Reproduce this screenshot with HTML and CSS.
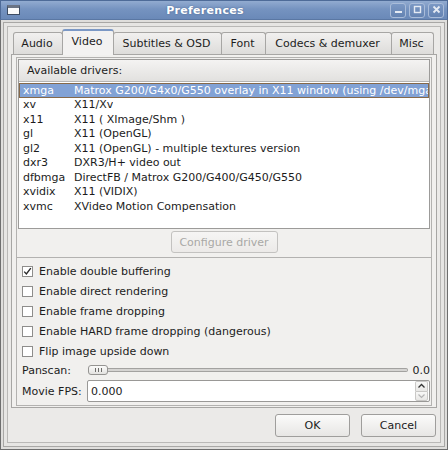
FILE: index.html
```html
<!DOCTYPE html>
<html>
<head>
  <title>Preferences</title>
  <link rel="stylesheet" href="styles.css">
</head>
<body>
<div class="window">
  <div class="titlebar">
    <div class="winicon"></div>
    <div class="title">Preferences</div>
    <div class="wbtns">
      <div class="wbtn">
        <svg width="13" height="12" viewBox="0 0 13 12"><rect x="3" y="7" width="7" height="2" fill="#e4eaf3"/></svg>
      </div>
      <div class="wbtn">
        <svg width="13" height="12" viewBox="0 0 13 12"><rect x="3.5" y="2.5" width="6" height="6" fill="none" stroke="#e4eaf3" stroke-width="1.4"/></svg>
      </div>
      <div class="wbtn">
        <svg width="13" height="12" viewBox="0 0 13 12"><path d="M3.5 2.5 L9.5 8.5 M9.5 2.5 L3.5 8.5" stroke="#e4eaf3" stroke-width="1.8"/></svg>
      </div>
    </div>
  </div>

  <div class="client">
    <div class="dialog">
      <div class="tabs">
        <div class="tab">Audio</div>
        <div class="tab active">Video</div>
        <div class="tab">Subtitles &amp; OSD</div>
        <div class="tab">Font</div>
        <div class="tab">Codecs &amp; demuxer</div>
        <div class="tab">Misc</div>
      </div>

      <div class="panel">
        <div class="drivers">
          <div class="list">
            <div class="listhead">Available drivers:</div>
            <div class="row sel"><span class="name">xmga</span><span class="desc">Matrox G200/G4x0/G550 overlay in X11 window (using /dev/mga_vid)</span></div>
            <div class="row"><span class="name">xv</span><span class="desc">X11/Xv</span></div>
            <div class="row"><span class="name">x11</span><span class="desc">X11 ( XImage/Shm )</span></div>
            <div class="row"><span class="name">gl</span><span class="desc">X11 (OpenGL)</span></div>
            <div class="row"><span class="name">gl2</span><span class="desc">X11 (OpenGL) - multiple textures version</span></div>
            <div class="row"><span class="name">dxr3</span><span class="desc">DXR3/H+ video out</span></div>
            <div class="row"><span class="name">dfbmga</span><span class="desc">DirectFB / Matrox G200/G400/G450/G550</span></div>
            <div class="row"><span class="name">xvidix</span><span class="desc">X11 (VIDIX)</span></div>
            <div class="row"><span class="name">xvmc</span><span class="desc">XVideo Motion Compensation</span></div>
          </div>
          <div class="confrow">
            <button class="btn conf" disabled>Configure driver</button>
          </div>
        </div>

        <div class="options">
          <div class="check">
            <span class="box"><svg width="9" height="9" viewBox="0 0 9 9"><path d="M1.2 4.6 L3.4 7 L7.8 1.2" fill="none" stroke="#2a2a2a" stroke-width="1.4"/></svg></span>
            Enable double buffering
          </div>
          <div class="check"><span class="box"></span>Enable direct rendering</div>
          <div class="check"><span class="box"></span>Enable frame dropping</div>
          <div class="check"><span class="box"></span>Enable HARD frame dropping (dangerous)</div>
          <div class="check"><span class="box"></span>Flip image upside down</div>

          <div class="field pan">
            <span class="flabel">Panscan:</span>
            <div class="slider">
              <div class="handle"><i></i><i></i><i></i></div>
              <div class="groove"></div>
            </div>
            <span class="value">0.0</span>
          </div>
          <div class="field fps">
            <span class="flabel">Movie FPS:</span>
            <div class="spin">
              <span class="spintext">0.000</span>
              <div class="arrows">
                <div class="arrow up"><svg width="9" height="6" viewBox="0 0 9 6"><path d="M1.5 4.5 L4.5 1.5 L7.5 4.5" fill="none" stroke="#333" stroke-width="1.3"/></svg></div>
                <div class="arrow down"><svg width="9" height="6" viewBox="0 0 9 6"><path d="M1.5 1.5 L4.5 4.5 L7.5 1.5" fill="none" stroke="#b4b4b4" stroke-width="1.2"/></svg></div>
              </div>
            </div>
          </div>
        </div>
      </div>

      <div class="actions">
        <button class="btn">OK</button>
        <button class="btn">Cancel</button>
      </div>
    </div>
  </div>
</div>
</body>
</html>
```

FILE: styles.css
```css
* {
  box-sizing: border-box;
}

body {
  margin: 0;
  font-family: "DejaVu Sans", Verdana, sans-serif;
  font-size: 11px;
  color: #1c1c1c;
}

/* window frame */
.window {
  width: 448px;
  height: 450px;
  display: flex;
  flex-direction: column;
  background: #dfdedc;
  border: 1px solid #6e6e6e;
  border-top: none;
}

.titlebar {
  height: 20px;
  margin: 0 -1px;
  display: flex;
  align-items: center;
  background: linear-gradient(#92abd0, #7593c0 45%, #6a89b8);
  border: 1px solid #4e6b98;
  border-bottom-color: #5a77a3;
  color: #fff;
}

.winicon {
  width: 13px;
  height: 10px;
  margin-left: 6px;
  background: #fafafa;
  border: 1px solid #3d4c63;
  border-top-width: 3px;
  border-top-color: #6b7484;
}

.title {
  flex: 1;
  text-align: center;
  font-weight: bold;
  font-size: 11px;
  letter-spacing: 0.3px;
  text-shadow: 0 0 2px #4b6791;
}

.wbtns {
  display: flex;
  gap: 3px;
  margin-right: 3px;
}

.wbtn {
  width: 16px;
  height: 15px;
  border: 1px solid #a9bcd9;
  border-radius: 3px;
  background: linear-gradient(#7b98c4, #6483b2);
  display: flex;
  align-items: center;
  justify-content: center;
}

.client {
  flex: 1;
  min-width: 0;
  display: flex;
  margin: 2px;
  padding: 3px;
  border: 1px solid #a8a7a5;
  background: #e6e5e3;
}

.dialog {
  flex: 1;
  min-width: 0;
  display: flex;
  flex-direction: column;
  padding: 2px 3px 5px;
  border: 1px solid #b9b8b6;
  background: #ebeae8;
}

/* tabs */
.tabs {
  height: 25px;
  display: flex;
  align-items: flex-end;
  padding-left: 2px;
  position: relative;
  z-index: 1;
}

.tab {
  height: 22px;
  margin-right: -1px;
  padding-right: 2px;
  display: flex;
  align-items: center;
  justify-content: center;
  border: 1px solid #a7a6a4;
  border-bottom: none;
  border-radius: 3px 3px 0 0;
  background: linear-gradient(#f1f0ef, #dddcda);
  white-space: nowrap;
}

.tab:nth-child(1) { width: 50px; }
.tab:nth-child(2) { width: 52px; }
.tab:nth-child(3) { width: 109px; }
.tab:nth-child(4) { width: 45px; }
.tab:nth-child(5) { width: 127px; }
.tab:nth-child(6) { width: 43px; }

.tab.active {
  height: 26px;
  margin-bottom: -1px;
  padding-bottom: 3px;
  background: #f3f2f1;
  border-top: 2px solid #7b98c5;
}

.panel {
  flex: 1;
  min-width: 0;
  padding: 2px 4px 1px;
  border: 1px solid #a7a6a4;
  background: #f1f0ee;
}

/* driver list */
.drivers {
  padding: 1px 1px 4px;
  border: 1px solid #b3b2b0;
}

.list {
  height: 170px;
  overflow: hidden;
  border: 1px solid #9c9b99;
  background: #fff;
}

.listhead {
  height: 22px;
  padding-left: 8px;
  display: flex;
  align-items: center;
  background: linear-gradient(#f4f3f2, #e2e1df);
  border-bottom: 1px solid #b5b4b2;
}

.row {
  height: 14.5px;
  display: flex;
  align-items: center;
  white-space: nowrap;
  overflow: hidden;
}

.listhead + .row {
  margin-top: 1px;
}

.row.sel {
  background: #82a2d5;
  color: #fff;
  outline: 1px solid #86694a;
  outline-offset: -1px;
}

.name {
  width: 55px;
  flex: none;
  padding-left: 4px;
}

.desc {
  overflow: hidden;
}

.confrow {
  display: flex;
  justify-content: center;
  margin-top: 2px;
}

.btn {
  height: 23px;
  font: inherit;
  color: #1c1c1c;
  border: 1px solid #9f9e9c;
  border-radius: 3px;
  background: linear-gradient(#fbfbfa, #e7e6e4);
  padding: 0;
}

.btn.conf {
  width: 107px;
  height: 22px;
  color: #a9a8a6;
  border-color: #c3c2c0;
  background: linear-gradient(#f6f5f4, #eceae8);
}

/* options */
.options {
  padding: 3px 1px 3px 5px;
  border: 1px solid #b3b2b0;
  border-top: none;
}

.check {
  height: 20px;
  display: flex;
  align-items: center;
}

.box {
  width: 11px;
  height: 11px;
  margin-right: 6px;
  border: 1px solid #8e8d8b;
  background: #fff;
  display: flex;
  align-items: center;
  justify-content: center;
}

.field {
  display: flex;
  align-items: center;
}

.field.pan {
  height: 18px;
}

.field.fps {
  height: 22px;
  margin-top: 1px;
}

.flabel {
  width: 66px;
  flex: none;
}

.slider {
  flex: 1;
  display: flex;
  align-items: center;
}

.handle {
  width: 20px;
  height: 10px;
  border: 1px solid #959492;
  border-radius: 3px;
  background: linear-gradient(#fbfbfa, #e3e2e0);
  display: flex;
  justify-content: center;
  align-items: center;
  gap: 2px;
}

.handle i {
  width: 1px;
  height: 4px;
  background: #6d6c6a;
}

.groove {
  flex: 1;
  height: 4px;
  border: 1px solid #a3a2a0;
  border-left: none;
  border-radius: 0 2px 2px 0;
  background: #d5d4d2;
}

.value {
  width: 22px;
  text-align: right;
}

.spin {
  flex: 1;
  height: 22px;
  margin-left: -1px;
  display: flex;
  align-items: center;
  border: 1px solid #999896;
  border-radius: 2px;
  background: #fff;
}

.spintext {
  flex: 1;
  padding-left: 3px;
}

.arrows {
  width: 13px;
  height: 20px;
  margin-right: 1px;
  display: flex;
  flex-direction: column;
}

.arrow {
  flex: 1;
  display: flex;
  align-items: center;
  justify-content: center;
  border: 1px solid #c9c8c6;
  background: linear-gradient(#f8f8f7, #e8e7e5);
}

.arrow.up {
  border-bottom: none;
  border-radius: 2px 2px 0 0;
}

.arrow.down {
  border-radius: 0 0 2px 2px;
}

/* dialog buttons */
.actions {
  display: flex;
  justify-content: flex-end;
  gap: 11px;
  margin-top: 6px;
  margin-right: 1px;
}

.actions .btn {
  width: 75px;
}
```
